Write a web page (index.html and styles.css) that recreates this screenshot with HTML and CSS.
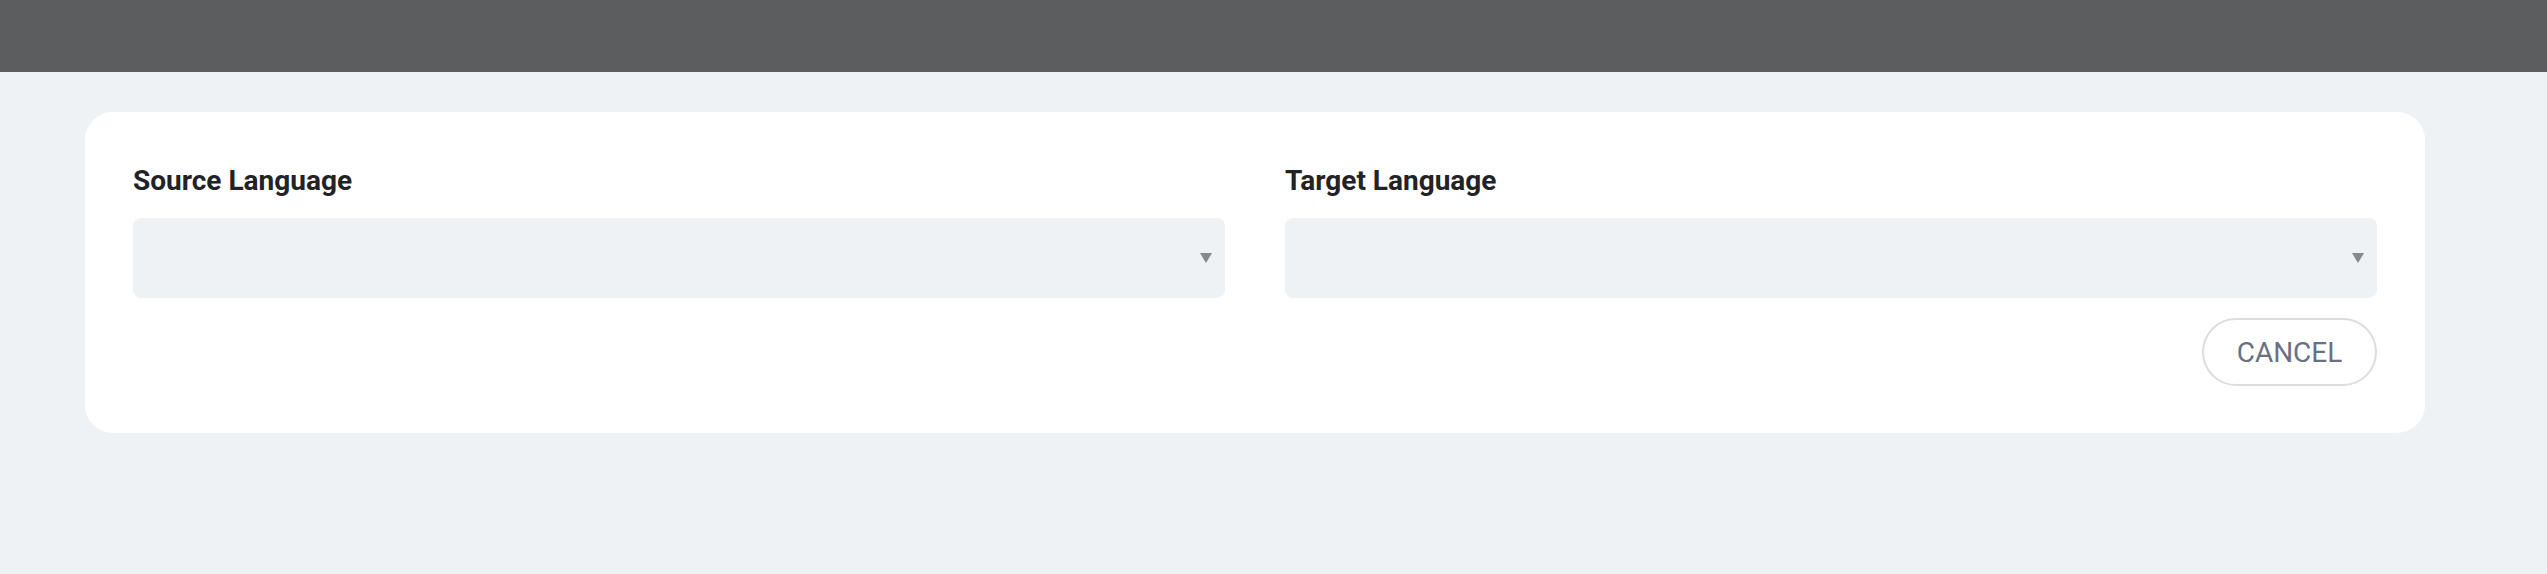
FILE: index.html
```html
<!DOCTYPE html>
<html lang="en">
<head>
<meta charset="utf-8">
<title>Language</title>
<link rel="stylesheet" href="styles.css">
</head>
<body>
  <header class="topbar"></header>
  <main class="page">
    <section class="card">
      <div class="fields">
        <div class="field">
          <label class="field-label">Source Language</label>
          <div class="select"><span class="caret"></span></div>
        </div>
        <div class="field">
          <label class="field-label">Target Language</label>
          <div class="select"><span class="caret"></span></div>
        </div>
      </div>
      <div class="actions">
        <button class="btn-cancel" type="button">CANCEL</button>
      </div>
    </section>
  </main>
</body>
</html>
```

FILE: styles.css
```css
* { box-sizing: border-box; }

html, body {
  margin: 0;
  padding: 0;
  background: #eef2f5;
  font-family: Roboto, "Liberation Sans", sans-serif;
}

.topbar {
  height: 72px;
  background: #5c5d5f;
}

.page {
  padding: 40px 122px 0 85px;
}

.card {
  background: #ffffff;
  border-radius: 28px;
  padding: 48px 48px 47px 48px;
}

.fields {
  display: grid;
  grid-template-columns: 1fr 1fr;
  column-gap: 60px;
}

.field {
  display: flex;
  flex-direction: column;
}

.field-label {
  font-size: 28px;
  line-height: 42px;
  font-weight: 700;
  color: #212327;
}

.select {
  margin-top: 16px;
  height: 80px;
  background: #eef2f5;
  border-radius: 8px;
  display: flex;
  align-items: center;
  justify-content: flex-end;
  padding-right: 13px;
}

.caret {
  width: 0;
  height: 0;
  border-left: 6px solid transparent;
  border-right: 6px solid transparent;
  border-top: 10px solid #888888;
}

.actions {
  display: flex;
  justify-content: flex-end;
  margin-top: 20px;
}

.btn-cancel {
  height: 68px;
  width: 175px;
  border: 2px solid #dddddd;
  border-radius: 34px;
  background: #ffffff;
  font-family: Roboto, "Liberation Sans", sans-serif;
  font-size: 28px;
  font-weight: 400;
  color: #6b7080;
  padding: 0;
  cursor: pointer;
}
```
